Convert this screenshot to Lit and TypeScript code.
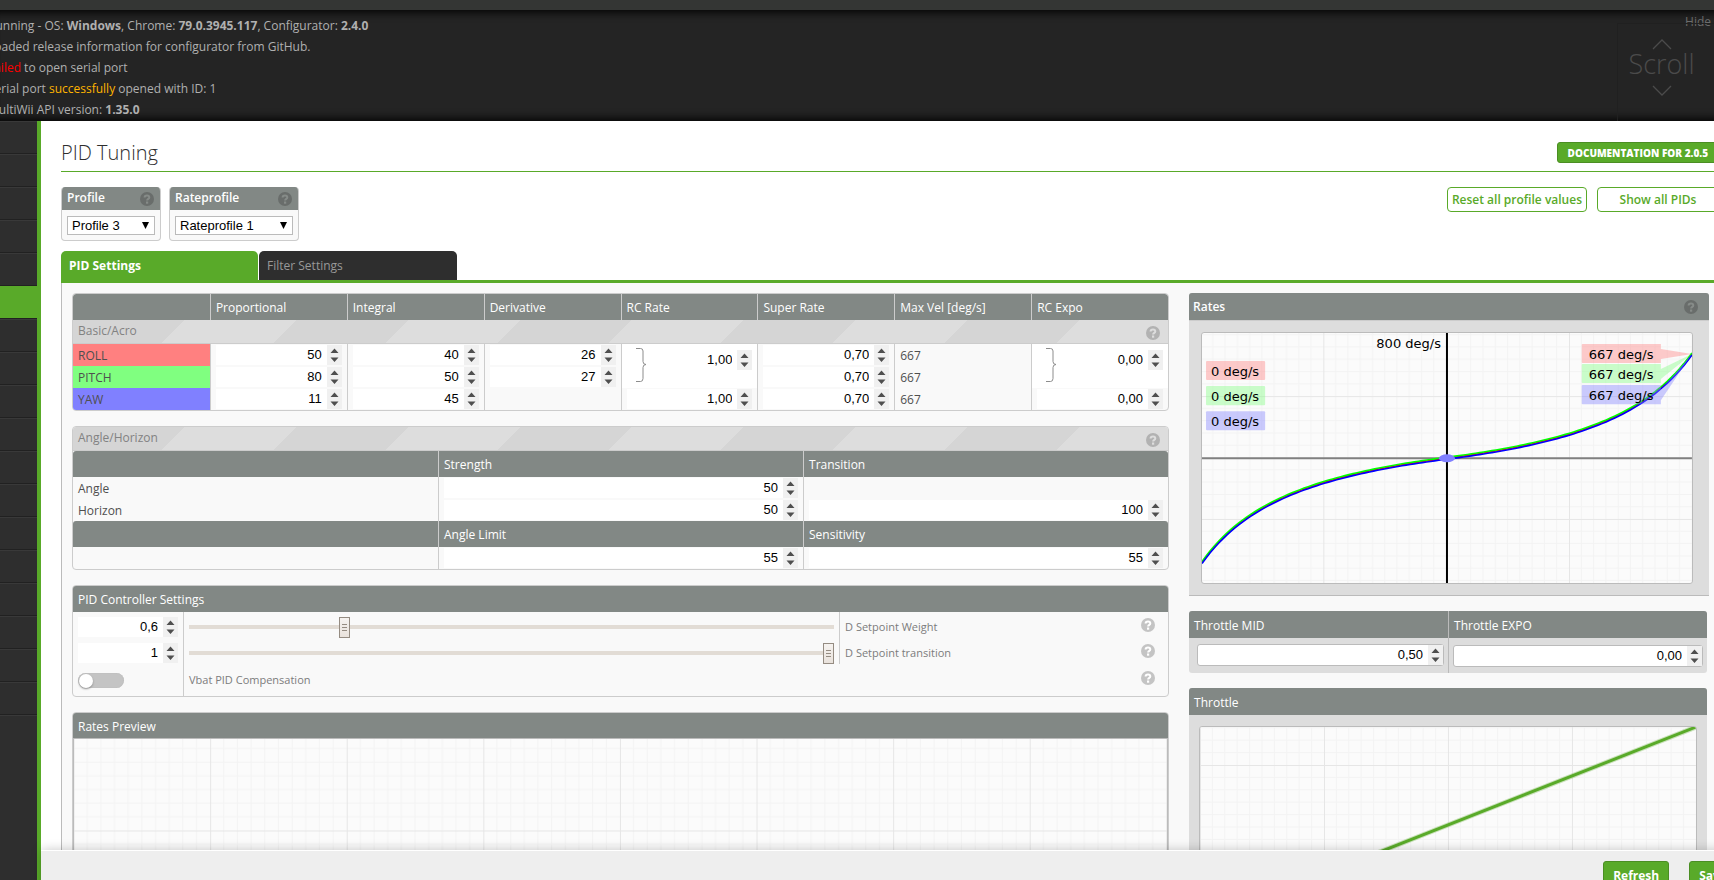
import { LitElement, html, svg, css, nothing } from "lit";
import { customElement } from "lit/decorators.js";

interface AxisRow {
  name: string;
  tone: string;
  pid: (string | null)[];
  superRate: string;
  maxVel: string;
}

const AXES: AxisRow[] = [
  { name: "ROLL", tone: "roll", pid: ["50", "40", "26"], superRate: "0,70", maxVel: "667" },
  { name: "PITCH", tone: "pitch", pid: ["80", "50", "27"], superRate: "0,70", maxVel: "667" },
  { name: "YAW", tone: "yaw", pid: ["11", "45", null], superRate: "0,70", maxVel: "667" },
];

const PID_COLUMNS = ["Proportional", "Integral", "Derivative"];
const RATE_COLUMNS = ["RC Rate", "Super Rate", "Max Vel [deg/s]", "RC Expo"];
const MENU_ITEMS = 18;
const ACTIVE_ITEM = 5;

const CHART_W = 489;
const CHART_H = 250;

/* Rate curve: 200 * stick / (1 - |stick| * superRate), drawn on a +-800 deg/s scale. */
function ratePath(shift: number): string {
  const points: string[] = [];
  for (let i = -60; i <= 60; i++) {
    const stick = i / 60;
    const rate = (200 * stick) / (1 - Math.abs(stick) * 0.7);
    const x = ((stick + 1) * CHART_W) / 2;
    const y = CHART_H / 2 - (rate / 800) * (CHART_H / 2) + shift;
    points.push(`${x.toFixed(2)} ${y.toFixed(2)}`);
  }
  return "M" + points.join("L");
}

@customElement("app-root")
export class AppRoot extends LitElement {
  static styles = css`
    :host {
      display: block;
      height: 100vh;
      overflow: hidden;
      background: #2e2e2e;
      font: 12px/18px "Open Sans", "Noto Sans", sans-serif;
      color: #4f4f4f;
    }
    * { box-sizing: border-box; }
    button, input, select { font: inherit; margin: 0; }

    .app { display: flex; flex-direction: column; height: calc(100vh + 20px); margin-right: -25px; }
    .topbar { flex: none; height: 10px; background: #343634; }
    .log {
      flex: none;
      display: flex;
      justify-content: space-between;
      height: 111px;
      background: #242424;
      box-shadow: inset 0 12px 10px -10px #000, inset 0 -12px 10px -10px #000;
      color: #b0b0b0;
      overflow: hidden;
    }
    .lines { list-style: none; margin: 0 0 0 -12px; padding: 5px 0 0; line-height: 21px; white-space: nowrap; }
    .bad { color: #f00; }
    .good { color: #ffb400; }
    .logside { display: flex; flex-direction: column; width: 122px; }
    .hide {
      align-self: flex-end;
      height: 13px;
      margin-right: 28px;
      padding: 0;
      border: 0;
      background: none;
      color: #6c6c6c;
      line-height: 24px;
    }
    .scroll {
      flex: 1;
      display: flex;
      flex-direction: column;
      align-items: center;
      gap: 4px;
      padding: 15px 34px 0 0;
      border: solid #202020;
      border-width: 1px 0 0 1px;
      color: #4b4b4b;
      font-size: 27px;
      font-weight: 300;
      line-height: 19px;
    }
    .scroll span { padding-bottom: 8px; }

    .body { flex: 1; display: flex; min-height: 0; }
    .menu { flex: none; width: 41px; border-right: 4px solid #59aa29; }
    .menu ul { list-style: none; margin: 0; padding: 0; border-bottom: 1px solid #393939; }
    .menu li { height: 33px; border-top: 1px solid #393939; border-bottom: 1px solid #212121; }
    .menu .active { background: #59aa29; border-top-color: #59aa29; }

    .page { flex: 1; display: flex; flex-direction: column; min-width: 0; background: #fff; }
    .content { flex: 1; min-height: 0; overflow: hidden; padding: 20px 20px 0; }
    .heading {
      display: flex;
      justify-content: space-between;
      height: 31px;
      border-bottom: 1px solid #59aa29;
    }
    h1 { margin: 0; color: #2e2e2e; font-size: 20px; font-weight: 300; line-height: 24px; }
    .doc {
      height: 21px;
      margin-top: 1px;
      padding: 0 10px;
      border: 1px solid #4b8e23;
      border-radius: 3px;
      background: #59aa29;
      color: #fff;
      font-size: 10px;
      font-weight: 800;
      line-height: 20px;
      text-decoration: none;
      white-space: nowrap;
    }
    .tools { display: flex; gap: 8px; margin-top: 15px; align-items: flex-start; }
    .profile {
      width: 100px;
      border: 1px solid #ccc;
      border-top: 0;
      border-radius: 4px;
      background: #f9f9f9;
      overflow: hidden;
    }
    .profile.wide { width: 130px; }
    .phead {
      display: flex;
      justify-content: space-between;
      align-items: center;
      height: 23px;
      margin: 0 -1px;
      padding: 0 7px 0 6px;
      background: #828885;
      color: #fff;
      font-weight: 600;
    }
    .phead label { padding-bottom: 2px; }
    .pick { display: grid; align-items: center; margin: 6px 5px 5px; }
    .pick > * { grid-area: 1 / 1; }
    .pick select {
      appearance: none;
      height: 19px;
      border: 1px solid #bbb;
      border-radius: 0;
      padding: 0 4px;
      background: #fff;
      color: #000;
      font: 13px/17px "Liberation Sans", Arial, sans-serif;
    }
    .pick svg { justify-self: end; margin-right: 6px; pointer-events: none; }
    .actions { display: flex; gap: 10px; margin-left: auto; }
    .outline {
      height: 25px;
      padding: 0 4px;
      border: 1px solid #59aa29;
      border-radius: 4px;
      background: #fff;
      color: #59aa29;
      font-weight: 600;
      line-height: 23px;
      min-width: 122px;
      white-space: nowrap;
    }

    .tabs { display: flex; gap: 1px; margin-top: 10px; height: 32px; border-bottom: 3px solid #59aa29; }
    .tab {
      width: 198px;
      padding: 0 8px;
      border: 0;
      border-radius: 5px 5px 0 0;
      background: #2e2e2e;
      color: #999;
      text-align: left;
    }
    .tab.on { width: 197px; background: #59aa29; color: #fff; font-weight: 700; }

    .sheet {
      display: grid;
      grid-template-columns: minmax(0, 211fr) minmax(0, 100fr);
      gap: 20px;
      padding: 10px 10px 0;
      border-left: 1px solid #bbb;
      background: #f9f9f9;
    }
    .col { display: flex; flex-direction: column; gap: 15px; min-width: 0; }

    .box { border: 1px solid #ccc; border-radius: 4px; overflow: hidden; }
    table { width: 100%; table-layout: fixed; border-collapse: separate; border-spacing: 0; }
    th, td { padding: 0 5px; border-left: 1px solid #ccc; text-align: left; font-weight: 400; height: 22px; line-height: 20px; }
    th, .value { padding-top: 2px; }
    tr > :first-child { border-left-width: 0; }
    th.h { height: 26px; background: #828885; color: #fff; }
    th.h:first-child { border-top-left-radius: 3px; }
    th.h:last-child { border-top-right-radius: 3px; }
    .stripe {
      display: flex;
      justify-content: space-between;
      align-items: center;
      height: 24px;
      padding: 0 8px 0 5px;
      border-bottom: 1px solid #ccc;
      background: repeating-linear-gradient(135deg, #d5d5d5 0 10%, #ddd 10% 20%);
      color: #828282;
    }
    .stripe span { padding-bottom: 2px; }
    .stripe svg { margin-top: 2px; }
    th.flat { padding: 0; height: auto; }
    .roll { background: #ff8080; }
    .pitch { background: #80ff80; }
    .yaw { background: #8080ff; }
    .joint { background: #fff; vertical-align: top; }
    .pair { display: flex; align-items: center; gap: 4px; padding: 4px 0 0 9px; }
    .pair svg { flex: none; }
    .pair .num { align-self: flex-start; margin-top: 2px; }

    .num { display: flex; flex: 1; min-width: 0; height: 20px; background: #fff; }
    .num input {
      flex: 1;
      width: 0;
      min-width: 0;
      padding: 0 5px 0 0;
      border: 0;
      background: none;
      color: #000;
      font: 13px/18px "Liberation Sans", Arial, sans-serif;
      text-align: right;
    }
    .num svg { flex: none; background: #f0f0f0; }
    .num.framed { height: 22px; border: 1px solid #bbb; border-radius: 3px; }

    .title { display: flex; align-items: center; height: 26px; padding: 2px 5px 0; background: #828885; color: #fff; }
    .controls { display: grid; grid-template-columns: 110px minmax(0, 1fr) 329px; color: #7c7c7c; font-size: 11px; }
    .controls > * { display: flex; align-items: center; height: 26px; padding: 5px 5px 1px; }
    .controls > .bar, .controls > .name { border-left: 1px solid #ccc; }
    .controls > .name { justify-content: space-between; padding-right: 13px; }
    .controls > .name svg { margin-top: -4px; }
    .controls > .low { height: 32px; padding-bottom: 4px; }
    .controls > .name.low { padding-bottom: 6px; }
    .span { grid-column: span 2; }
    .range { appearance: none; width: 100%; height: 21px; background: none; }
    .range::-webkit-slider-runnable-track { height: 4px; background: #e2dcd5; }
    .range::-webkit-slider-thumb {
      appearance: none;
      width: 11px;
      height: 21px;
      margin-top: -8px;
      border: 1px solid #958c82;
      background:
        linear-gradient(#958c82 0 1px, transparent 1px 3px, #958c82 3px 4px, transparent 4px 6px, #958c82 6px 7px)
          center / 5px 7px no-repeat,
        linear-gradient(#f6f3f0, #e9e2dc);
    }
    .switch {
      appearance: none;
      display: flex;
      align-items: center;
      width: 46px;
      height: 15px;
      border-radius: 8px;
      background: #c4c4c4;
      box-shadow: inset 0 0 1px #aaa;
    }
    .switch::before {
      content: "";
      width: 14px;
      height: 14px;
      margin-left: 1px;
      border-radius: 50%;
      background: #fff;
      box-shadow: 0 1px 2px #888;
    }
    .plot { display: block; width: 100%; height: auto; background: #fbfbfb; }
    .preview .title { height: 25px; }
    .preview .plot { border: 1px solid #bbb; }

    .panel { border-radius: 3px; background: #ddd; overflow: hidden; }
    .panel .title { height: 27px; }
    .rates { border-bottom: 1px solid #bbb; border-radius: 3px 3px 0 0; }
    .rates .title { justify-content: space-between; padding: 0 11px 0 4px; border-bottom: 1px solid #ccc; height: 28px; font-weight: 600; }
    .rates .plot { width: calc(100% - 28px); margin: 11px 16px 11px 12px; border: 1px solid #bbb; border-radius: 3px; }
    .short { margin-right: 2px; }
    .halves { display: grid; grid-template-columns: 1fr 1fr; }
    .halves > :nth-child(even) { border-left: 1px solid #bbb; }
    .halves .field { padding: 6px 4px 7px 8px; }
    .halves .field + .field { padding: 7px 4px 6px; }
    .throttle .plot { width: calc(100% - 20px); margin: 11px 10px; border: 1px solid #bbb; border-radius: 3px; }

    .plottext { font: 13px "DejaVu Sans", Verdana, sans-serif; fill: #000; }

    .footer {
      flex: none;
      position: relative;
      display: flex;
      justify-content: flex-end;
      gap: 20px;
      height: 50px;
      padding: 10px 2px 0 0;
      border-top: 1px solid #fff;
      background: #eee;
      box-shadow: 0 0 10px rgba(0, 0, 0, 0.22);
    }
    .solid {
      height: 30px;
      padding: 0 9px;
      border: 1px solid #4b8e23;
      border-radius: 3px;
      background: #59aa29;
      color: #fff;
      font-weight: 700;
      line-height: 28px;
    }
  `;

  private help(disc: string, mark: string) {
    return html`<svg width="14" height="14" viewBox="0 0 14 14" role="img" aria-label="Help">
      <circle cx="7" cy="7" r="7" fill=${disc}></circle>
      <path d="M4.6 5.4C4.6 4.1 5.6 3.500 7 3.500S9.300 4.200 9.300 5.4C9.300 6.900 7.100 6.900 7.100 8.600" fill="none" stroke=${mark} stroke-width="2"></path>
      <rect x="6" y="9.500" width="2.200" height="2.200" fill=${mark}></rect>
    </svg>`;
  }

  private num(value: string, label: string, extra = "", id: string | typeof nothing = nothing) {
    return html`<span class="num ${extra}">
      <input type="text" inputmode="decimal" id=${id} aria-label=${label} .value=${value} />
      <svg width="15" height="20" viewBox="0 0 15 20" aria-hidden="true">
        <path d="M3.500 8L7.500 3.500L11.500 8ZM3.500 12.500L7.500 17L11.500 12.500Z" fill="#4f4f4f"></path>
      </svg>
    </span>`;
  }

  private joined(value: string, label: string) {
    return html`<td class="joint" rowspan="2">
      <div class="pair">
        <svg width="11" height="34" viewBox="0 0 11 34" aria-hidden="true">
          <path d="M0 .5H4.500Q7 .5 7 3V13.500Q7 16.500 10 16.500Q7 16.500 7 19.500V30.500Q7 33.500 4.500 33.500H0" fill="none" stroke="#8c8c8c"></path>
        </svg>
        ${this.num(value, label)}
      </div>
    </td>`;
  }

  private profile(label: string, value: string, wide: boolean) {
    const id = label.toLowerCase();
    return html`<div class="profile ${wide ? "wide" : ""}">
      <div class="phead"><label for=${id}>${label}</label>${this.help("#696d6b", "#868b88")}</div>
      <div class="pick">
        <select id=${id}><option>${value}</option></select>
        <svg width="7" height="7" viewBox="0 0 7 7" aria-hidden="true"><path d="M0 0H7L3.500 7Z"></path></svg>
      </div>
    </div>`;
  }

  /* Ten-by-ten squared paper; x0 and y0 place one of its heavy lines. */
  private grid(id: string, step: number, x0: number, y0: number, w: number, h: number) {
    const minor = [1, 2, 3, 4, 5, 6, 7, 8, 9].map((n) => (n * step) / 10);
    return svg`
      <pattern id=${id} x=${x0} y=${y0} width=${step} height=${step} patternUnits="userSpaceOnUse">
        ${minor.map((p) => svg`<path d=${`M${p} 0V${step}M0 ${p}H${step}`} stroke="#f3f3f3"></path>`)}
        <path d=${`M.5 0V${step}M0 .5H${step}`} stroke="#e6e6e6"></path>
      </pattern>
      <rect width=${w} height=${h} fill=${`url(#${id})`}></rect>`;
  }

  private zeroLabel(y: number, fill: string) {
    return svg`<rect x="4" y=${y} width="59" height="19" rx="1" fill=${fill} opacity=".4"></rect>
      <text class="plottext" x="9" y=${y + 15}>0 deg/s</text>`;
  }

  private balloon(y: number, tail: number, fill: string) {
    return svg`<path d=${`M380 ${y}H458V${tail}L489 21L458 ${tail + 10}V${y + 19}H380Q379 ${y + 19} 379 ${y + 18}V${y + 1}Q379 ${y} 380 ${y}Z`} fill=${fill} opacity=".4"></path>
      <text class="plottext" x="386" y=${y + 15}>667 deg/s</text>`;
  }

  private ratesPlot() {
    return html`<svg class="plot" viewBox="0 0 489 250" role="img" aria-label="Rates curve">
      ${this.grid("g1", 122.6, -1.5, 63, CHART_W, CHART_H)}
      <path d="M0 125H489" stroke="#808080" stroke-width="2"></path>
      <path d="M244.500 0V250" stroke="#000" stroke-width="2"></path>
      <g fill="none" stroke-width="1.600">
        <path d=${ratePath(0)} stroke="#f00"></path>
        <path d=${ratePath(-1)} stroke="#0f0"></path>
        <path d=${ratePath(1)} stroke="#00f"></path>
      </g>
      <ellipse cx="244.500" cy="125" rx="8" ry="4" fill="#8080ff"></ellipse>
      <text class="plottext" x="174" y="15">800 deg/s</text>
      ${this.zeroLabel(28, "#ff8080")} ${this.zeroLabel(53, "#80ff80")} ${this.zeroLabel(78, "#8080ff")}
      ${this.balloon(11, 16, "#ff8080")} ${this.balloon(31, 36, "#80ff80")} ${this.balloon(52, 57, "#8080ff")}
    </svg>`;
  }

  private slider(id: string, name: string, value: string, pos: number, max: number) {
    return html`
      <div>${this.num(value, name + " value")}</div>
      <div class="bar"><input class="range" id=${id} type="range" min="0" max=${max} step="0.01" .value=${String(pos)} /></div>
      <div class="name"><label for=${id}>${name}</label>${this.help("#c4c4c4", "#fff")}</div>`;
  }

  private mainTable() {
    return html`<div class="box"><table>
      <tr>
        <th class="h"></th>
        ${[...PID_COLUMNS, ...RATE_COLUMNS].map((c) => html`<th class="h">${c}</th>`)}
      </tr>
      <tr><th class="flat" colspan="8"><div class="stripe"><span>Basic/Acro</span>${this.help("#b2b2b2", "#ddd")}</div></th></tr>
      ${AXES.map((a, i) => html`<tr>
        <th class=${a.tone}>${a.name}</th>
        ${a.pid.map((v, k) => html`<td>${v === null ? nothing : this.num(v, `${a.name} ${PID_COLUMNS[k]}`)}</td>`)}
        ${i === 0 ? this.joined("1,00", "Roll and pitch RC Rate") : nothing}
        ${i === 2 ? html`<td>${this.num("1,00", "Yaw RC Rate")}</td>` : nothing}
        <td>${this.num(a.superRate, `${a.name} Super Rate`)}</td>
        <td class="value">${a.maxVel}</td>
        ${i === 0 ? this.joined("0,00", "Roll and pitch RC Expo") : nothing}
        ${i === 2 ? html`<td>${this.num("0,00", "Yaw RC Expo")}</td>` : nothing}
      </tr>`)}
    </table></div>`;
  }

  private angleTable() {
    return html`<div class="box">
      <div class="stripe"><span>Angle/Horizon</span>${this.help("#b2b2b2", "#ddd")}</div>
      <table>
        <tr><th class="h"></th><th class="h">Strength</th><th class="h">Transition</th></tr>
        <tr><th>Angle</th><td>${this.num("50", "Angle Strength")}</td><td></td></tr>
        <tr><th>Horizon</th><td>${this.num("50", "Horizon Strength")}</td><td>${this.num("100", "Horizon Transition")}</td></tr>
        <tr><th class="h"></th><th class="h">Angle Limit</th><th class="h">Sensitivity</th></tr>
        <tr><td></td><td>${this.num("55", "Angle Limit")}</td><td>${this.num("55", "Sensitivity")}</td></tr>
      </table>
    </div>`;
  }

  render() {
    return html`<div class="app">
      <div class="topbar"></div>
      <div class="log">
        <ul class="lines">
          <li>Running - OS: <b>Windows</b>, Chrome: <b>79.0.3945.117</b>, Configurator: <b>2.4.0</b></li>
          <li>Loaded release information for configurator from GitHub.</li>
          <li><span class="bad">Failed</span> to open serial port</li>
          <li>Serial port <span class="good">successfully</span> opened with ID: 1</li>
          <li>MultiWii API version: <b>1.35.0</b></li>
        </ul>
        <div class="logside">
          <button class="hide">Hide</button>
          <div class="scroll">
            <svg width="20" height="11" viewBox="0 0 20 11" fill="none" stroke="currentColor" stroke-width="1.300"><path d="M1 10L10 1L19 10"></path></svg>
            <span>Scroll</span>
            <svg width="20" height="11" viewBox="0 0 20 11" fill="none" stroke="currentColor" stroke-width="1.300"><path d="M1 1L10 10L19 1"></path></svg>
          </div>
        </div>
      </div>
      <div class="body">
        <nav class="menu"><ul>
          ${Array.from({ length: MENU_ITEMS }, (_, i) => html`<li class=${i === ACTIVE_ITEM ? "active" : ""}></li>`)}
        </ul></nav>
        <div class="page">
          <main class="content">
            <div class="heading"><h1>PID Tuning</h1><a class="doc" href="#">DOCUMENTATION FOR 2.0.5</a></div>
            <div class="tools">
              ${this.profile("Profile", "Profile 3", false)} ${this.profile("Rateprofile", "Rateprofile 1", true)}
              <div class="actions">
                <button class="outline">Reset all profile values</button>
                <button class="outline">Show all PIDs</button>
              </div>
            </div>
            <div class="tabs"><button class="tab on">PID Settings</button><button class="tab">Filter Settings</button></div>
            <div class="sheet">
              <div class="col">
                ${this.mainTable()} ${this.angleTable()}
                <div class="box">
                  <div class="title">PID Controller Settings</div>
                  <div class="controls">
                    ${this.slider("dweight", "D Setpoint Weight", "0,6", 0.6, 2.54)}
                    ${this.slider("dtransition", "D Setpoint transition", "1", 1, 1)}
                    <div class="low"><input class="switch" id="vbat" type="checkbox" role="switch" /></div>
                    <div class="name low span"><label for="vbat">Vbat PID Compensation</label>${this.help("#c4c4c4", "#fff")}</div>
                  </div>
                </div>
                <div class="box preview">
                  <div class="title">Rates Preview</div>
                  <svg class="plot" viewBox="0 0 1093 240" role="img" aria-label="Rates preview">
                    ${this.grid("g2", 136.6, -0.5, 91.500, 1093, 240)}
                  </svg>
                </div>
              </div>
              <div class="col">
                <div class="panel rates">
                  <div class="title">Rates ${this.help("#696d6b", "#868b88")}</div>
                  ${this.ratesPlot()}
                </div>
                <div class="panel halves short">
                  <label class="title" for="tmid">Throttle MID</label>
                  <label class="title" for="texpo">Throttle EXPO</label>
                  <div class="field">${this.num("0,50", "Throttle MID", "framed", "tmid")}</div>
                  <div class="field">${this.num("0,00", "Throttle EXPO", "framed", "texpo")}</div>
                </div>
                <div class="panel throttle short">
                  <div class="title">Throttle</div>
                  <svg class="plot" viewBox="0 0 496 196" role="img" aria-label="Throttle curve">
                    ${this.grid("g3", 124, 0, 38, 496, 196)}
                    <path d="M0 196L496 0" stroke="#59aa29" stroke-opacity=".3" stroke-width="5"></path>
                    <path d="M0 196L496 0" stroke="#59aa29" stroke-width="3"></path>
                  </svg>
                </div>
              </div>
            </div>
          </main>
          <div class="footer"><button class="solid">Refresh</button><button class="solid">Save</button></div>
        </div>
      </div>
    </div>`;
  }
}
